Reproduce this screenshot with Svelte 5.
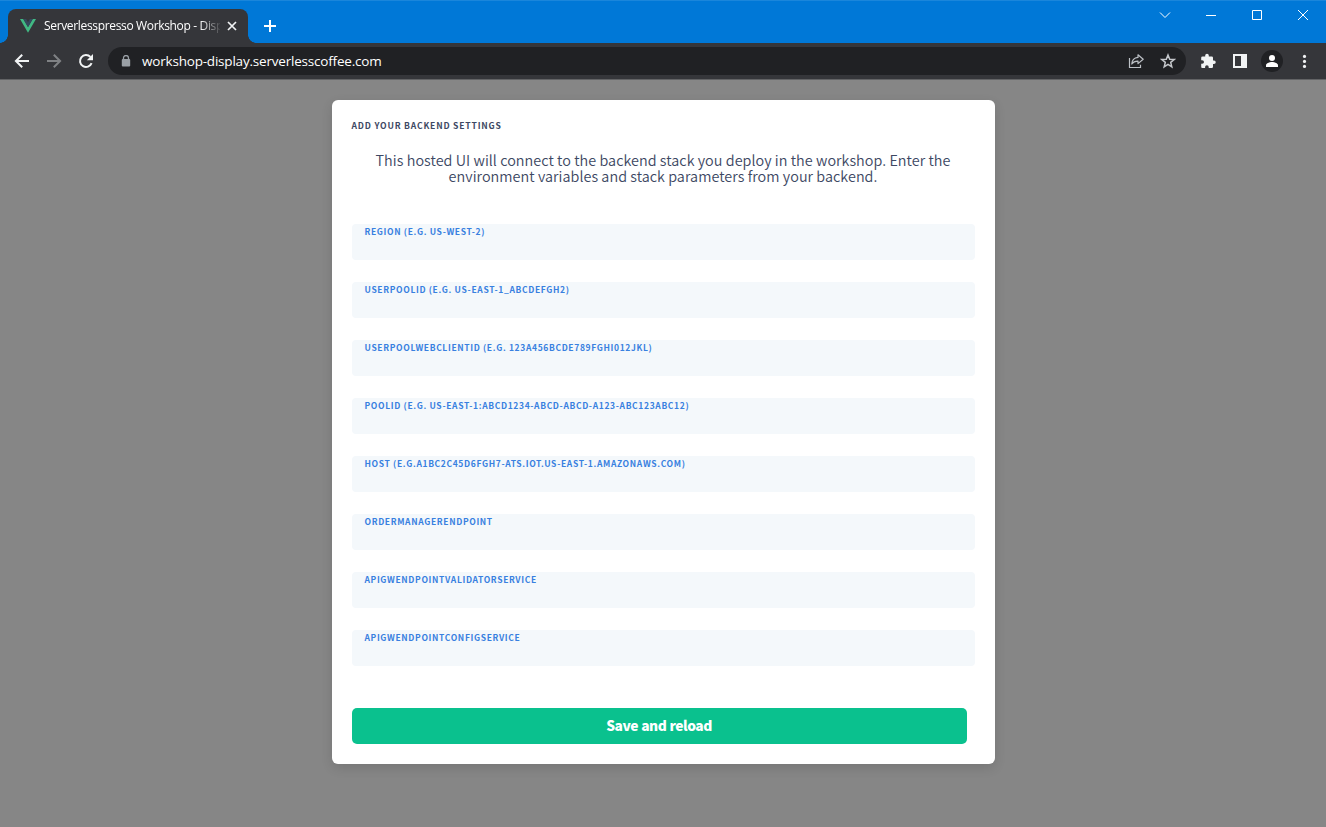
<script>
  const fields = [
    'Region (e.g. us-west-2)',
    'UserPoolId (e.g. us-east-1_abcdefgh2)',
    'UserPoolWebClientId (e.g. 123a456bcde789fghi012jkl)',
    'PoolId (e.g. us-east-1:abcd1234-abcd-abcd-a123-abc123abc12)',
    'Host (e.g.a1bc2c45d6fgh7-ats.iot.us-east-1.amazonaws.com)',
    'orderManagerEndpoint',
    'APIGWEndpointValidatorService',
    'APIGWEndpointConfigService'
  ];
</script>

<div class="window">
  <div class="tabs">
    <div class="tab">
      <svg class="vue" width="16" height="16" viewBox="0 0 16 16">
        <path d="M0 1h3.3L8 9.1 12.7 1H16L8 14.7z" fill="#41b883" />
        <path d="M3.2 1h2.9L8 4.3 9.9 1h2.9L8 9.2z" fill="#35495e" />
      </svg>
      <span class="title">Serverlesspresso Workshop - Display</span>
      <svg class="close" width="16" height="16" viewBox="0 0 16 16"><path d="M4 4l8 8M12 4l-8 8" stroke="#f1f3f4" stroke-width="1.7" /></svg>
    </div>
    <svg class="plus" width="16" height="16" viewBox="0 0 16 16"><path d="M8 2v12M2 8h12" stroke="#fff" stroke-width="2" /></svg>
    <div class="controls">
      <svg width="46" height="30" viewBox="0 0 46 30"><path d="M18 12.5l5 5 5-5" /></svg>
      <svg width="46" height="30" viewBox="0 0 46 30"><path d="M18 15.5h10" /></svg>
      <svg width="46" height="30" viewBox="0 0 46 30"><path d="M18.5 10.5h9v9h-9z" /></svg>
      <svg width="46" height="30" viewBox="0 0 46 30"><path d="M18 10l10 10M28 10l-10 10" /></svg>
    </div>
  </div>
  <div class="toolbar">
    <svg width="16" height="16" viewBox="0 0 16 16"><path d="M15 8H2.3M8.2 1.7L1.9 8l6.3 6.3" fill="none" stroke="#f1f3f4" stroke-width="2" /></svg>
    <svg width="16" height="16" viewBox="0 0 16 16"><path d="M1 8h12.7M7.8 1.7L14.1 8l-6.3 6.3" fill="none" stroke="#7f8184" stroke-width="2" /></svg>
    <svg width="16" height="16" viewBox="0 0 16 16"><path d="M13.6 10.2A6 6 0 1 1 12.4 3.9" fill="none" stroke="#f1f3f4" stroke-width="2" /><path d="M15 1v6.2H8.8z" fill="#f1f3f4" /></svg>
    <div class="address">
      <svg class="lock" width="10" height="12" viewBox="0 0 10 12"><path d="M2.5 5V3a2.5 2.5 0 0 1 5 0v2" fill="none" stroke="#9aa0a6" stroke-width="1.3" /><rect x=".8" y="4" width="8.4" height="7.6" rx="1" fill="#9aa0a6" /></svg>
      <span class="url">workshop-display.serverlesscoffee.com</span>
      <svg width="16" height="16" viewBox="0 0 16 16"><path d="M1.5 5v9.5h11v-2.8" fill="none" stroke="#bdc1c6" stroke-width="1.2" /><path d="M10 1.8l5.2 4.4-5.2 4.4V8.1c-3-.1-4.9.9-6.2 2.9.2-3.8 2.5-6.2 6.2-6.6z" fill="none" stroke="#bdc1c6" stroke-width="1.2" stroke-linejoin="round" /></svg>
      <svg class="star" width="16" height="16" viewBox="0 0 16 16"><path d="M8 2l1.7 4.2 4.5.3-3.5 2.9 1.1 4.4L8 11.4l-3.8 2.4 1.1-4.4-3.5-2.9 4.5-.3z" fill="none" stroke="#c5c8cc" stroke-width="1.5" /></svg>
    </div>
    <svg class="puzzle" width="16" height="16" viewBox="0 0 16 16"><path d="M14 7.5h-1V4.7a1.3 1.3 0 0 0-1.3-1.3H8.8V2.5a1.8 1.8 0 0 0-3.6 0v.9H2.5a1.3 1.3 0 0 0-1.3 1.3v2.5h1a1.8 1.8 0 0 1 0 3.6h-1v2.7A1.3 1.3 0 0 0 2.5 15h2.6v-1a1.8 1.8 0 0 1 3.6 0v1h3A1.3 1.3 0 0 0 13 13.7V11h1a1.75 1.75 0 0 0 0-3.5z" fill="#f1f3f4" /></svg>
    <svg width="16" height="16" viewBox="0 0 16 16"><path d="M1 1h14v14H1zM3 3v10h6V3z" fill="#f1f3f4" fill-rule="evenodd" /></svg>
    <svg class="avatar" width="22" height="22" viewBox="0 0 22 22"><circle cx="11" cy="11" r="11" fill="#202124" /><circle cx="11" cy="7.9" r="3" fill="#fff" /><path d="M5 17v-1.7c0-2 3.5-3.3 6-3.3s6 1.3 6 3.3V17z" fill="#fff" /></svg>
    <svg class="dots" width="16" height="16" viewBox="0 0 16 16" fill="#f1f3f4"><circle cx="8.5" cy="3.4" r="1.6" /><circle cx="8.5" cy="8.4" r="1.6" /><circle cx="8.5" cy="13.4" r="1.6" /></svg>
  </div>
  <main>
    <section class="card">
      <h1>Add your backend settings</h1>
      <p>This hosted UI will connect to the backend stack you deploy in the workshop. Enter the<br />environment variables and stack parameters from your backend.</p>
      <form>
        {#each fields as field}
          <div class="field"><span>{field}</span></div>
        {/each}
        <button type="button">Save and reload</button>
      </form>
    </section>
  </main>
</div>

<style>
  :global(body) { margin: 0; overflow: hidden; }
  .window { width: 1326px; height: 827px; display: flex; flex-direction: column; background: #868686; }
  svg { display: block; flex: none; }
  .tabs { height: 43px; box-sizing: border-box; flex: none; display: flex; align-items: flex-start; background: #0078d7; border-top: 1px solid #1a86db; padding-left: 8px; }
  .tab { position: relative; width: 240px; height: 34px; margin-top: 8px; box-sizing: border-box; display: flex; align-items: center; padding: 0 8px 0 12px; background: #35363a; border-radius: 8px 8px 0 0; }
  .tab::before, .tab::after { content: ''; position: absolute; bottom: 0; width: 8px; height: 8px; }
  .tab::before { left: -8px; background: radial-gradient(circle at 0 0, transparent 7.5px, #35363a 8px); }
  .tab::after { right: -8px; background: radial-gradient(circle at 100% 0, transparent 7.5px, #35363a 8px); }
  .title { width: 176px; margin-left: 8px; overflow: hidden; white-space: nowrap; color: #fff; font: 12px/18px 'Open Sans', sans-serif; letter-spacing: -0.34px; mask-image: linear-gradient(to right, #000 156px, transparent 178px); }
  .close { margin-left: 4px; }
  .plus { margin: 17px 0 0 14px; }
  .controls { display: flex; margin: -1px 0 0 auto; }
  .controls path { fill: none; stroke: #fff; stroke-width: 1; }
  .toolbar { height: 37px; flex: none; box-sizing: border-box; display: flex; align-items: center; gap: 16px; background: #35363a; border-bottom: 1px solid #626365; padding: 0 14px; }
  .address { flex: none; width: 1078px; height: 28px; margin: 0 -2px 0 -2px; box-sizing: border-box; display: flex; align-items: center; padding: 0 10px 0 13px; border-radius: 14px; background: #202124; }
  .url { margin: 0 auto 0 11px; color: #fff; font: 13.5px/20px 'Open Sans', sans-serif; letter-spacing: -0.2px; }
  .star { margin-left: 16px; }
  .avatar { margin: 0 -3px; }
  main { flex: 1; display: flex; justify-content: center; align-items: flex-start; padding-top: 20px; font-family: 'Noto Sans CJK SC', sans-serif; }
  .card { width: 663px; height: 664px; box-sizing: border-box; padding: 19px 20px 20px; border-radius: 6px; background: #fff; box-shadow: 0 4px 12px rgba(0, 0, 0, 0.12); }
  h1 { margin: 0; font-size: 8.6px; line-height: 12px; font-weight: 700; letter-spacing: 0.8px; text-transform: uppercase; color: #3d4863; }
  p { margin: 21px 0 40px; text-align: center; font-size: 14.4px; line-height: 16px; font-weight: 350; letter-spacing: 0.04px; color: #3d4863; }
  form { display: flex; flex-direction: column; gap: 22px; }
  .field { height: 36px; box-sizing: border-box; padding: 1px 13px; border-radius: 4px; background: #f4f8fb; }
  .field span { display: block; font-size: 8.5px; line-height: 12px; font-weight: 700; letter-spacing: 0.65px; text-transform: uppercase; white-space: nowrap; color: #3880e0; }
  button { width: 615px; height: 36px; margin-top: 20px; padding: 0 0 2px; border: 0; border-radius: 5px; background: #0ac18e; color: #fff; font: 900 13.8px/20px 'Noto Sans CJK SC', sans-serif; letter-spacing: -0.5px; word-spacing: 0.7px; }
</style>
